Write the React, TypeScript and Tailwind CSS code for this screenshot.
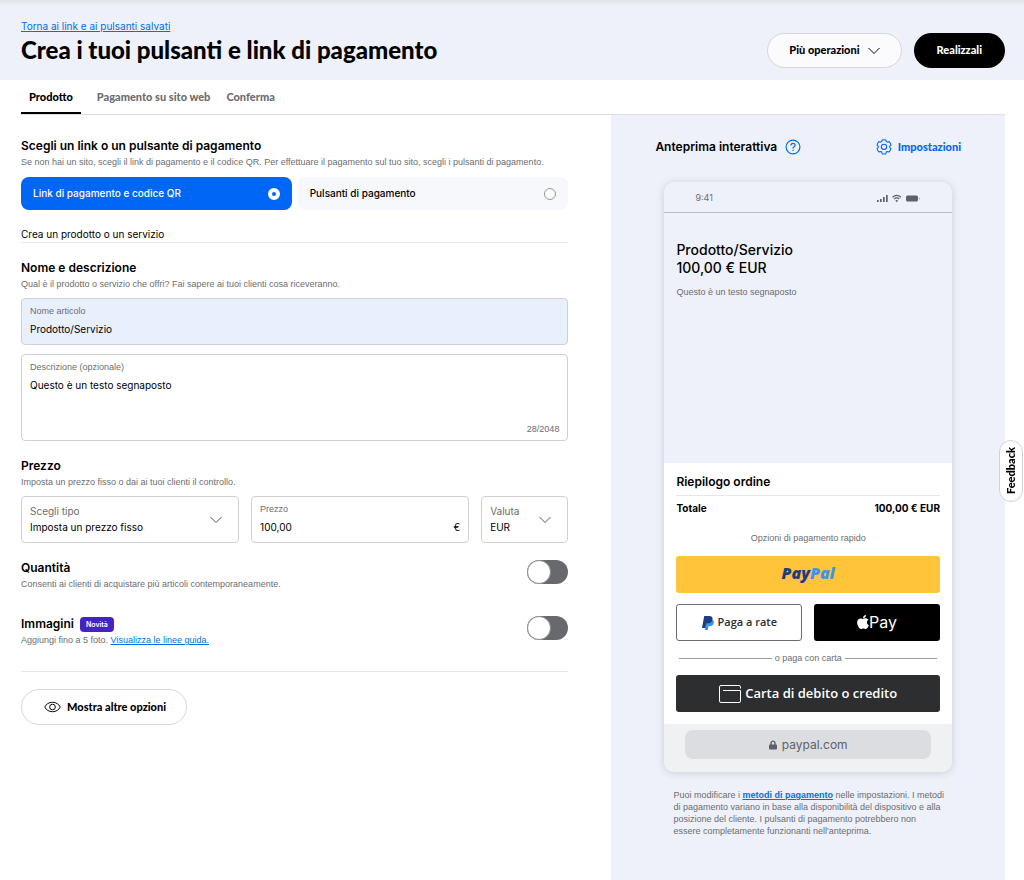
/**
 * App.tsx
 *
 * The "create a payment link or button" page: product form on the left,
 * live phone preview of the checkout on the right.
 */

import { useState } from 'react'
import type { ReactNode } from 'react'
import { FaApple, FaLock } from 'react-icons/fa'

const TABS = ['Prodotto', 'Pagamento su sito web', 'Conferma']

const LINK_TYPES = [
  { id: 'link', label: 'Link di pagamento e codice QR' },
  { id: 'button', label: 'Pulsanti di pagamento' },
]

const MAX_DESCRIPTION = 2048

// Shared text styles
const smallText = "text-[9px] leading-3 text-[#6c6d70] font-['Liberation_Sans',sans-serif]"
const displayText = "text-[11px] font-black font-['Lato',sans-serif]"

function Chevron() {
  return (
    <svg viewBox="0 0 12 7" className="w-3 h-2 shrink-0" fill="none" stroke="currentColor" aria-hidden="true">
      <path d="M.5.5 6 6 11.5.5" />
    </svg>
  )
}

function EyeIcon() {
  return (
    <svg viewBox="0 0 18 12" className="w-[17px] h-3" fill="none" stroke="currentColor" aria-hidden="true">
      <path d="M.8 6c1.500-3.200 4.600-5 8.200-5s6.700 1.800 8.200 5c-1.500 3.200-4.600 5-8.200 5S2.300 9.200.8 6Z" />
      <circle cx="9" cy="6" r="3" />
    </svg>
  )
}

function HelpIcon() {
  return (
    <svg viewBox="0 0 16 16" className="w-4 h-4" fill="none" stroke="currentColor" strokeWidth="1.2" aria-hidden="true">
      <circle cx="8" cy="8" r="6.900" />
      <path d="M5.900 6.500c0-1.300.9-2.100 2.100-2.100s2.100.8 2.100 1.900c0 1.500-2.100 1.500-2.100 3.100" />
      <path d="M8 10.700v1.300" />
    </svg>
  )
}

function GearIcon() {
  return (
    <svg viewBox="0 0 24 24" className="w-4 h-4" fill="none" stroke="currentColor" strokeWidth="1.600" strokeLinejoin="round" aria-hidden="true">
      <path d="M9.200 1.500c1.800-.6 3.800-.6 5.600 0l.6 2.300 1.600.9 2.500-.8c1.400 1.300 2.400 3 2.900 4.900l-1.800 1.900v2l1.800 1.900c-.5 1.900-1.500 3.600-2.900 4.900l-2.500-.8-1.600.9-.6 2.500c-1.800.6-3.800.6-5.600 0l-.6-2.500-1.600-.9-2.500.8c-1.400-1.300-2.400-3-2.900-4.900l1.800-1.900v-2L1.600 8.800c.5-1.900 1.500-3.600 2.900-4.900l2.500.8 1.600-.9Z" />
      <circle cx="12" cy="11.800" r="4" />
    </svg>
  )
}

function PaypalMark() {
  return (
    <svg viewBox="0 0 12 14" className="w-3 h-3.5" aria-hidden="true">
      <path d="M4 3.200h5.600c1.900.7 2.600 2.100 2.200 3.800-.5 2.300-2.300 3.300-4.400 3.300h-.9L5.800 14H2.800Z" fill="#3b96ea" />
      <path d="M2.200 0h5.100c2.400 0 3.700 1.300 3.200 3.700C10 6.200 8.200 7.300 5.800 7.300H4.200L3.300 12H0Z" fill="#1b3d82" />
    </svg>
  )
}

function CardIcon() {
  return (
    <svg viewBox="0 0 22 18" className="w-[22px] h-[18px]" fill="none" stroke="currentColor" aria-hidden="true">
      <path d="M21.500 3.500V2A1.500 1.500 0 0 0 20 .5H2A1.500 1.500 0 0 0 .5 2v14A1.500 1.500 0 0 0 2 17.500h18a1.500 1.500 0 0 0 1.500-1.500V5.500H4" />
    </svg>
  )
}

function StatusIcons() {
  return (
    <svg viewBox="0 0 44 9" className="w-11 h-[9px]" fill="#5f6166" aria-hidden="true">
      <rect x="0" y="6" width="1.700" height="2" />
      <rect x="3" y="5" width="1.700" height="3" />
      <rect x="6" y="3" width="1.700" height="5" />
      <rect x="9" y="1" width="1.700" height="7" />
      <path d="M15.500 3.200c2.500-2.200 6-2.200 8.500 0M17.200 5c1.500-1.300 3.600-1.300 5.100 0" fill="none" stroke="#5f6166" strokeWidth="1.200" />
      <path d="m18.300 6.600 1.450 1.600 1.450-1.600c-.9-.7-2-.7-2.900 0Z" />
      <rect x="29" y="1.500" width="12" height="6" rx="1.500" />
      <path d="M42 3.500c.8.300.8 1.700 0 2Z" />
    </svg>
  )
}

function SectionTitle({ title, children }: { title: ReactNode; children: ReactNode }) {
  return (
    <div>
      <h2 className="flex items-center gap-1.5 text-[12px] leading-4 font-semibold">{title}</h2>
      <p className={`mt-0.5 ${smallText}`}>{children}</p>
    </div>
  )
}

function SelectField({ id, label, options }: { id: string; label: string; options: string[] }) {
  return (
    <div className="relative h-[47px] rounded border border-[#d0d1d6]">
      <label htmlFor={id} className="absolute left-2 top-2 text-[10px] leading-3 text-[#6c6d70]">{label}</label>
      <select id={id} className="w-full h-full appearance-none px-2 pt-4 text-[10px] bg-transparent">
        {options.map((o) => <option key={o}>{o}</option>)}
      </select>
      <span className="absolute right-4 top-[19px] text-[#55565a] pointer-events-none"><Chevron /></span>
    </div>
  )
}

function Toggle({ label }: { label: string }) {
  return (
    <input
      type="checkbox"
      role="switch"
      aria-label={label}
      className="appearance-none w-[41px] h-6 shrink-0 rounded-full bg-[#68696c] before:block before:w-6 before:h-6 before:rounded-full before:bg-white before:border before:border-[#909196] checked:bg-[#0066f5] checked:before:ml-4"
    />
  )
}

export default function App() {
  const [linkType, setLinkType] = useState('link')
  const [name, setName] = useState('Prodotto/Servizio')
  const [description, setDescription] = useState('Questo è un testo segnaposto')
  const [price, setPrice] = useState('100,00')

  return (
    <div className="min-h-screen flex flex-col bg-white text-black font-['Inter',sans-serif]">
      <header className="h-20 shrink-0 flex items-end justify-between pl-[21px] pr-[19px] pb-3 bg-[#eef1f9] bg-linear-to-b from-[#e2e4e9] to-[#eef1f9] to-[6px]">
        <div>
          <a href="#" className="block text-[10px] leading-3 text-[#0070e0] underline">Torna ai link e ai pulsanti salvati</a>
          <h1 className="text-[24px] leading-9 font-black font-['Lato',sans-serif]">Crea i tuoi pulsanti e link di pagamento</h1>
        </div>
        <div className={`flex gap-3 ${displayText}`}>
          <button className="h-[35px] px-[21px] flex items-center gap-2 rounded-full border border-[#d5d7dc] bg-[#fbfbfd]">
            Più operazioni
            <Chevron />
          </button>
          <button className="h-[35px] px-[23px] rounded-full bg-black text-white">Realizzali</button>
        </div>
      </header>

      <nav className={`ml-[21px] mr-[19px] h-[35px] shrink-0 flex gap-4 border-b border-[#dcdee3] ${displayText}`}>
        {TABS.map((tab, i) => (
          <a
            key={tab}
            href="#"
            className={i === 0 ? 'px-2 leading-[34px] border-b-2 border-black' : 'leading-[34px] text-[#6c6d70]'}
          >
            {tab}
          </a>
        ))}
      </nav>

      <div className="flex-1 grid grid-cols-[3fr_2fr] pl-[21px] pr-[19px]">
        {/* Product form */}
        <main className="pt-[23px] pr-[43px]">
          <SectionTitle title="Scegli un link o un pulsante di pagamento">
            Se non hai un sito, scegli il link di pagamento e il codice QR. Per effettuare il pagamento sul tuo sito, scegli i pulsanti di pagamento.
          </SectionTitle>

          <div className="mt-[9px] grid grid-cols-2 gap-1.5">
            {LINK_TYPES.map(({ id, label }) => (
              <label
                key={id}
                className={`h-[33px] px-3 flex items-center justify-between rounded-lg text-[10px] font-medium ${linkType === id ? 'bg-[#0066f5] text-white' : 'bg-[#f7f8fc]'}`}
              >
                {label}
                <input
                  type="radio"
                  name="linkType"
                  checked={linkType === id}
                  onChange={() => setLinkType(id)}
                  className="appearance-none w-3 h-3 rounded-full border border-[#929496] bg-white checked:border-4 checked:border-white checked:bg-[#0066f5]"
                />
              </label>
            ))}
          </div>

          <p className="mt-4 text-[10px] leading-4 border-b border-[#e6e7ea]">Crea un prodotto o un servizio</p>

          <div className="mt-[17px]">
            <SectionTitle title="Nome e descrizione">
              Qual è il prodotto o servizio che offri? Fai sapere ai tuoi clienti cosa riceveranno.
            </SectionTitle>
          </div>

          <div className="mt-2 h-[47px] px-2 pt-1.5 rounded border border-[#d0d1d6] bg-[#e8f0fe]">
            <label htmlFor="name" className={`block ${smallText}`}>Nome articolo</label>
            <input id="name" value={name} onChange={(e) => setName(e.target.value)} className="mt-1 block w-full text-[10px] leading-4 outline-none" />
          </div>

          <div className="mt-[9px] h-[87px] px-2 pt-1.5 pb-[5px] flex flex-col rounded border border-[#d0d1d6]">
            <label htmlFor="description" className={smallText}>Descrizione (opzionale)</label>
            <textarea
              id="description"
              value={description}
              onChange={(e) => setDescription(e.target.value)}
              maxLength={MAX_DESCRIPTION}
              className="mt-1 flex-1 resize-none text-[10px] leading-4 outline-none"
            />
            <span className={`self-end ${smallText}`}>{description.length}/{MAX_DESCRIPTION}</span>
          </div>

          <div className="mt-[17px]">
            <SectionTitle title="Prezzo">Imposta un prezzo fisso o dai ai tuoi clienti il controllo.</SectionTitle>
          </div>
          <div className="mt-2 grid grid-cols-[5fr_5fr_2fr] gap-3">
            <SelectField id="priceType" label="Scegli tipo" options={['Imposta un prezzo fisso']} />
            <div className="h-[47px] px-2 pt-1.5 rounded border border-[#d0d1d6]">
              <label htmlFor="price" className={`block ${smallText}`}>Prezzo</label>
              <div className="mt-1 flex text-[10px] leading-4">
                <input id="price" value={price} onChange={(e) => setPrice(e.target.value)} className="flex-1 min-w-0 outline-none" />
                <span>€</span>
              </div>
            </div>
            <SelectField id="currency" label="Valuta" options={['EUR']} />
          </div>

          <div className="mt-[17px] flex items-start justify-between">
            <SectionTitle title="Quantità">Consenti ai clienti di acquistare più articoli contemporaneamente.</SectionTitle>
            <Toggle label="Quantità" />
          </div>

          <div className="mt-[26px] flex items-start justify-between">
            <SectionTitle
              title={<>Immagini <span className="h-[15px] px-1.5 rounded bg-[#4622c0] text-white text-[7px] leading-[15px]">Novità</span></>}
            >
              Aggiungi fino a 5 foto. <a href="#" className="text-[#0070e0] underline">Visualizza le linee guida.</a>
            </SectionTitle>
            <Toggle label="Immagini" />
          </div>

          <hr className="mt-[25px] border-[#e6e7ea]" />

          <button className={`mt-[17px] h-9 pl-[22px] pr-5 flex items-center gap-1.5 rounded-full border border-[#d5d7dc] ${displayText}`}>
            <EyeIcon />
            Mostra altre opzioni
          </button>
        </main>

        {/* Interactive preview */}
        <aside className="pt-6 bg-[#eef1f9]">
          <div className="px-11 h-4 flex items-center justify-between">
            <h2 className="flex items-center gap-2 text-[12px] font-semibold">
              Anteprima interattiva
              <button aria-label="Aiuto" className="text-[#0070e0]"><HelpIcon /></button>
            </h2>
            <a href="#" className={`flex items-center gap-1.5 text-[#0066f5] ${displayText}`}>
              <GearIcon />
              Impostazioni
            </a>
          </div>

          <div className="mt-[27px] mx-[53px] rounded-[10px] overflow-hidden shadow-[0_1px_8px_rgba(0,0,0,0.14)]">
            <div className="h-[31px] px-[31px] pt-0.5 flex items-center justify-between border-b border-[#b9bec9] text-[9px] text-[#6c6d70]">
              9:41
              <StatusIcons />
            </div>

            <div className="h-[250px] px-3 pt-7">
              <p className="text-[14px] leading-[18px] font-medium">{name}<br />{price} € EUR</p>
              <p className={`mt-[9px] ${smallText}`}>{description}</p>
            </div>

            <div className="px-3 pt-[11px] pb-3 bg-white">
              <h3 className="pb-[5px] text-[12px] leading-4 font-semibold border-b border-[#e3e6ef]">Riepilogo ordine</h3>
              <div className="mt-1 flex justify-between text-[10px] leading-4 font-bold">
                <span>Totale</span>
                <span>{price} € EUR</span>
              </div>
              <p className={`mt-4 text-center ${smallText}`}>Opzioni di pagamento rapido</p>
              <button aria-label="PayPal" className="mt-3 w-full h-[37px] rounded-[3px] bg-[#ffc439] text-[16px] leading-5 pb-1 font-extrabold italic font-['Open_Sans',sans-serif] text-[#1b3d82]">
                Pay<span className="text-[#3b96ea]">Pal</span>
              </button>
              <div className="mt-[11px] grid grid-cols-2 gap-3">
                <button className="h-[37px] flex items-center justify-center gap-1 rounded-[3px] border border-[#6c6d70] text-[11px] font-semibold font-['Open_Sans',sans-serif] text-[#2c2e2f]">
                  <PaypalMark />
                  Paga a rate
                </button>
                <button className="h-[37px] pb-0.5 flex items-center justify-center rounded-[3px] bg-black text-white text-[16px]">
                  <FaApple className="w-3 h-4" />
                  Pay
                </button>
              </div>
              <div className={`mt-[11px] mx-[3px] flex items-center gap-[3px] ${smallText}`}>
                <span className="flex-1 h-px bg-[#9a9b9e]" />
                o paga con carta
                <span className="flex-1 h-px bg-[#9a9b9e]" />
              </div>
              <button className="mt-[11px] w-full h-[37px] flex items-center justify-center gap-1 rounded-[3px] bg-[#2c2e2f] text-white text-[13px] font-semibold font-['Open_Sans',sans-serif]">
                <CardIcon />
                Carta di debito o credito
              </button>
            </div>

            <div className="h-12 px-[21px] pt-1.5 bg-[#eff1f3]">
              <div className="h-[29px] flex items-center justify-center gap-[5px] rounded-lg bg-[#dcdde0] text-[12px] text-[#5f6166]">
                <FaLock className="w-2 h-2.5" />
                paypal.com
              </div>
            </div>
          </div>

          <p className={`mt-[17px] ml-[62px] mr-[60px] ${smallText}`}>
            Puoi modificare i <a href="#" className="font-bold text-[#0070e0] underline">metodi di pagamento</a> nelle impostazioni. I metodi di pagamento variano in base alla disponibilità del dispositivo e alla posizione del cliente. I pulsanti di pagamento potrebbero non essere completamente funzionanti nell'anteprima.
          </p>
        </aside>
      </div>

      <button className={`fixed right-px top-1/2 w-6 h-[62px] flex items-center justify-center rounded-full border border-[#cfd1d6] bg-white ${displayText}`}>
        <span className="[writing-mode:vertical-rl] rotate-180">Feedback</span>
      </button>
    </div>
  )
}
